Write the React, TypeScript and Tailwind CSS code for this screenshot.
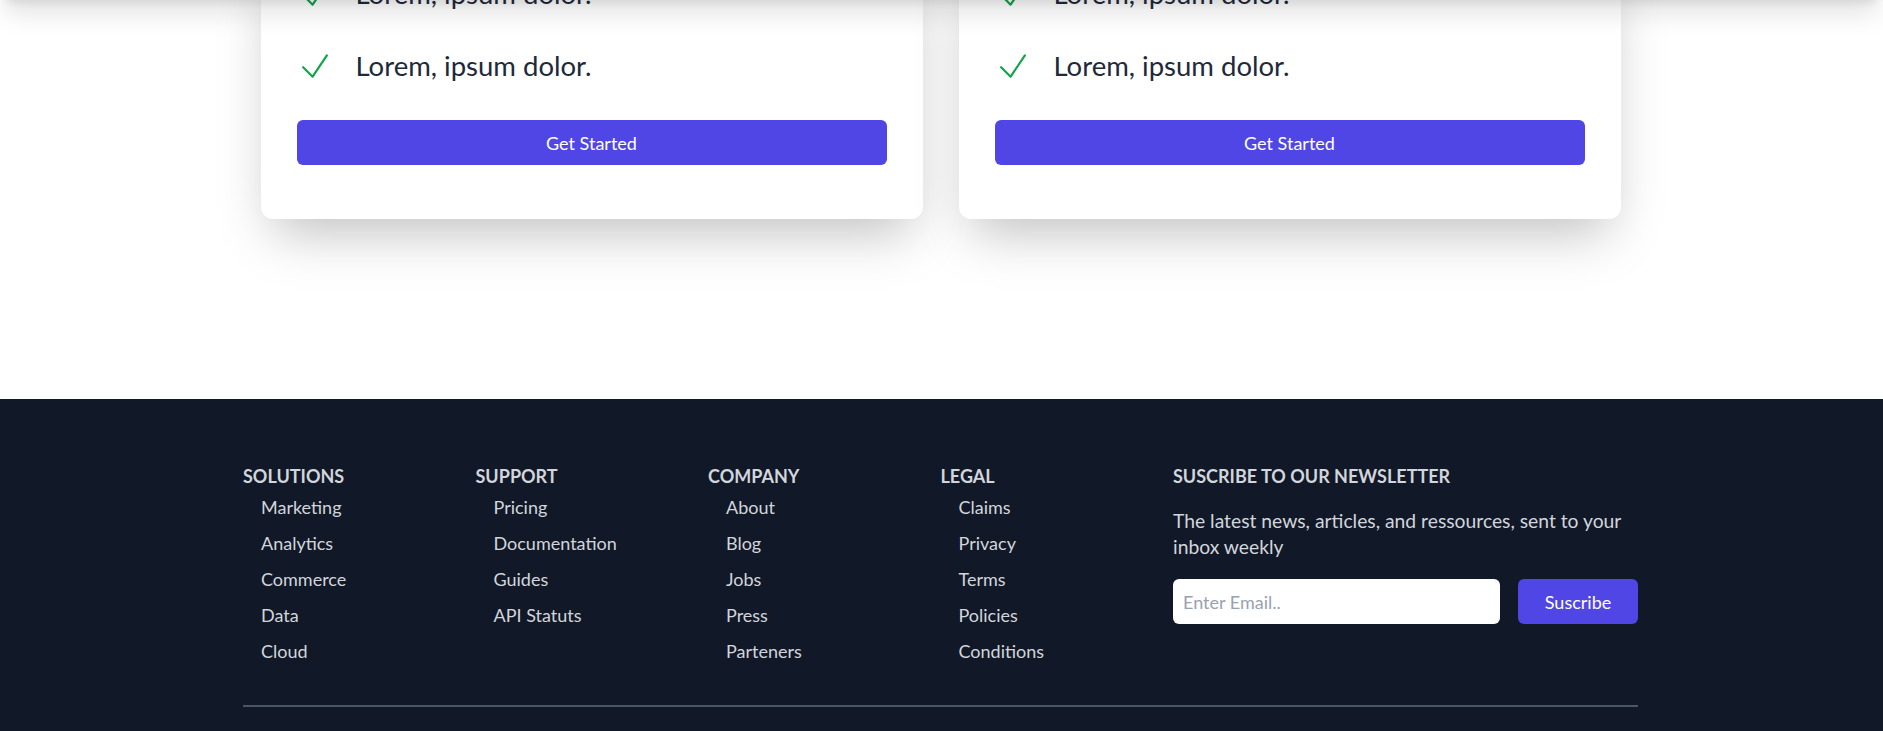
import React from "react";

const CheckIcon = () => (
  <svg
    viewBox="0 0 24 24"
    fill="none"
    stroke="currentColor"
    strokeWidth={1.4}
    className="w-[38px] h-[38px] shrink-0 -ml-[1px] text-[#16a34a]"
  >
    <path strokeLinecap="round" strokeLinejoin="round" d="M4.5 12.75l6 6 9-13.5" />
  </svg>
);

function PlanCard() {
  return (
    <div className="w-[662px] bg-white rounded-xl shadow-2xl px-9 pb-[54px]">
      <ul>
        {[0, 1].map((i) => (
          <li key={i} className="h-[72px] flex items-center gap-[22px]">
            <CheckIcon />
            <span className="text-[27.5px] text-[#1e293b]">Lorem, ipsum dolor.</span>
          </li>
        ))}
      </ul>
      <button className="mt-[18px] h-[45px] w-full rounded-md bg-[#4f46e5] text-white text-lg">
        Get Started
      </button>
    </div>
  );
}

const columns = [
  { title: "Solutions", links: ["Marketing", "Analytics", "Commerce", "Data", "Cloud"] },
  { title: "Support", links: ["Pricing", "Documentation", "Guides", "API Statuts"] },
  { title: "Company", links: ["About", "Blog", "Jobs", "Press", "Parteners"] },
  { title: "Legal", links: ["Claims", "Privacy", "Terms", "Policies", "Conditions"] },
];

export default function App() {
  return (
    <div className="min-h-screen bg-white font-['Lato',sans-serif] overflow-hidden">
      {/* navbar sits just above the viewport, only its shadow shows */}
      <div className="fixed inset-x-0 -top-16 h-16 bg-white shadow-xl z-10" />

      <section className="pb-[180px]">
        <div className="flex justify-center gap-9 -mt-[42px] pr-[2px]">
          <PlanCard />
          <PlanCard />
        </div>
      </section>

      <footer className="bg-[#111827] pt-[63px] pb-10">
        <div className="w-[1395px] mx-auto -translate-x-px">
          <div className="grid grid-cols-6">
            {columns.map((col) => (
              <div key={col.title}>
                <h3 className="text-lg leading-7 font-bold uppercase text-gray-300">{col.title}</h3>
                <ul className="mt-[3px] pl-[18px] flex flex-col gap-2">
                  {col.links.map((l) => (
                    <li key={l}>
                      <a href="#" className="text-lg leading-7 text-gray-300">
                        {l}
                      </a>
                    </li>
                  ))}
                </ul>
              </div>
            ))}
            <div className="col-span-2">
              <h3 className="text-lg leading-7 font-bold uppercase text-gray-300">
                Suscribe to our newsletter
              </h3>
              <p className="mt-[18px] max-w-[458px] text-[19.3px] leading-[26px] text-gray-300">
                The latest news, articles, and ressources, sent to your inbox weekly
              </p>
              <form className="mt-[19px] flex gap-[18px]">
                <input
                  type="email"
                  placeholder="Enter Email.."
                  className="w-[327px] h-[45px] rounded-md bg-white px-[10px] text-lg text-gray-800 placeholder:text-gray-400 outline-none"
                />
                <button
                  type="button"
                  className="w-[120px] h-[45px] rounded-md bg-[#4f46e5] text-white text-lg"
                >
                  Suscribe
                </button>
              </form>
            </div>
          </div>
          <hr className="mt-10 border-t-2 border-gray-600" />
        </div>
      </footer>
    </div>
  );
}
